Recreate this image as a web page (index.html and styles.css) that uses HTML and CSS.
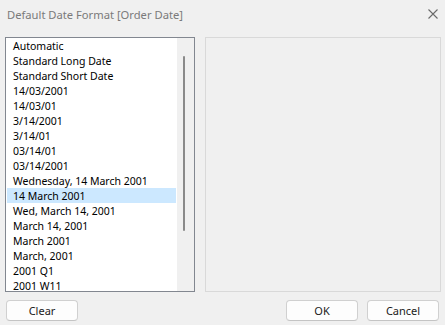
FILE: index.html
```html
<!DOCTYPE html>
<html>
<head>
<meta charset="utf-8">
<link rel="stylesheet" href="styles.css">
</head>
<body>
<div class="dialog">
  <div class="titlebar">
    <span class="title">Default Date Format [Order Date]</span>
    <svg class="close" width="10" height="10" viewBox="0 0 10 10"><path d="M0.5 0.5L9.5 9.5M9.5 0.5L0.5 9.5" stroke="#6a6a6a" stroke-width="1.1" fill="none"/></svg>
  </div>
  <div class="main">
    <div class="listbox">
      <ul class="items">
        <li>Automatic</li>
        <li>Standard Long Date</li>
        <li>Standard Short Date</li>
        <li>14/03/2001</li>
        <li>14/03/01</li>
        <li>3/14/2001</li>
        <li>3/14/01</li>
        <li>03/14/01</li>
        <li>03/14/2001</li>
        <li>Wednesday, 14 March 2001</li>
        <li class="selected">14 March 2001</li>
        <li>Wed, March 14, 2001</li>
        <li>March 14, 2001</li>
        <li>March 2001</li>
        <li>March, 2001</li>
        <li>2001 Q1</li>
        <li>2001 W11</li>
      </ul>
      <div class="scrollbar"><div class="thumb"></div></div>
    </div>
    <div class="preview"></div>
  </div>
  <div class="footer">
    <button class="btn">Clear</button>
    <div class="spacer"></div>
    <button class="btn">OK</button>
    <button class="btn">Cancel</button>
  </div>
</div>
</body>
</html>
```
FILE: styles.css
```css
html, body {
  margin: 0;
  padding: 0;
  background: #f0f0f0;
  width: 445px;
  height: 325px;
  overflow: hidden;
  font-family: "Noto Sans", "Liberation Sans", sans-serif;
  font-size: 10.5px;
  color: #000;
}
.dialog {
  display: flex;
  flex-direction: column;
  height: 325px;
}
.titlebar {
  height: 37px;
  display: flex;
  align-items: flex-start;
  justify-content: space-between;
  padding: 0 7px 0 7px;
  box-sizing: border-box;
}
.title {
  color: #7a7a7a;
  font-size: 11.2px;
  line-height: 14px;
  margin-top: 8px;
}
.close {
  margin-top: 9px;
  margin-right: 0;
}
.main {
  display: flex;
  height: 255px;
  padding-left: 5px;
  gap: 10px;
}
.listbox {
  width: 190px;
  height: 255px;
  box-sizing: border-box;
  border: 1px solid #828790;
  display: flex;
  background: #fff;
}
.items {
  list-style: none;
  margin: 0;
  padding: 0;
  width: 171px;
  overflow: hidden;
}
.items li {
  height: 15px;
  box-sizing: border-box;
  padding-top: 2px;
  line-height: 13px;
  padding-left: 6px;
  margin-left: 1px;
  margin-right: 1px;
  white-space: nowrap;
}
.items li.selected {
  background: #cce8ff;
}
.scrollbar {
  width: 17px;
  background: #f0f0f0;
  position: relative;
}
.thumb {
  position: absolute;
  left: 6px;
  top: 18px;
  width: 2px;
  height: 175px;
  background: #8a8a8a;
  border-radius: 1px;
}
.preview {
  width: 236px;
  height: 255px;
  box-sizing: border-box;
  border: 1px solid #d9d9d9;
}
.footer {
  display: flex;
  padding: 8px 6px 0 6px;
  gap: 9px;
}
.spacer {
  flex: 1;
}
.btn {
  width: 72px;
  height: 21px;
  box-sizing: border-box;
  border: 1px solid #d0d0d0;
  border-bottom-color: #c4c4c4;
  border-radius: 4px;
  background: #fdfdfd;
  font-family: "Noto Sans", "Liberation Sans", sans-serif;
  font-size: 11px;
  color: #1a1a1a;
  padding: 0;
  line-height: 18px;
}
```
